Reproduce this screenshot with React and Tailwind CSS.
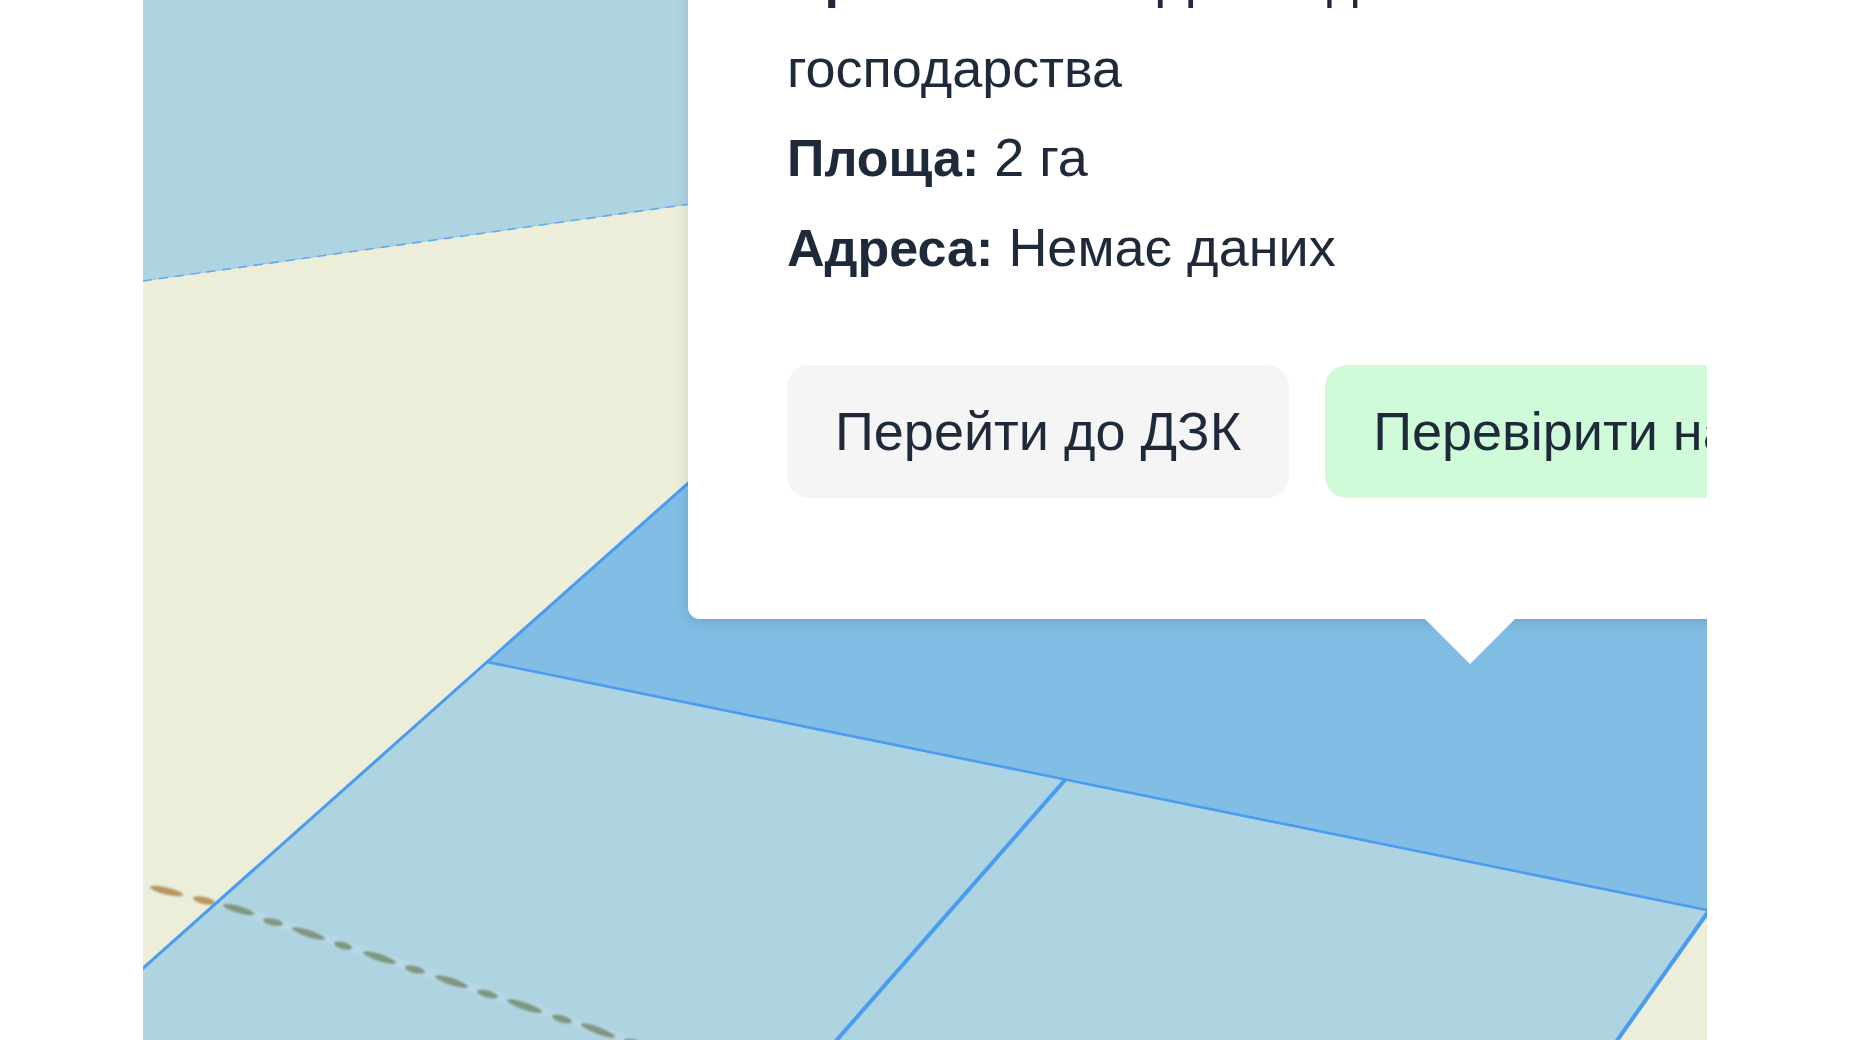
const PARCEL_STROKE = "#4a9cf0";

// Long and short strokes of the dirt track: [x1, y1, x2, y2]
const TRACK = [
  [7, 887, 40, 895],
  [50, 898, 72, 903],
  [80, 905, 111, 914],
  [120, 920, 140, 924],
  [149, 928, 182, 939],
  [191, 943, 209, 948],
  [220, 952, 253, 963],
  [262, 967, 282, 972],
  [292, 976, 325, 987],
  [334, 991, 355, 997],
  [364, 1000, 399, 1012],
  [409, 1016, 429, 1022],
  [438, 1024, 472, 1037],
  [481, 1040, 502, 1046],
];

const DETAILS = [
  {
    label: "Призначення:",
    value: "Для ведення особистого селянського господарства",
  },
  { label: "Площа:", value: "2 га" },
  { label: "Адреса:", value: "Немає даних" },
];

function TrackDash({ points: [x1, y1, x2, y2] }) {
  const cx = (x1 + x2) / 2;
  const cy = (y1 + y2) / 2;
  const length = Math.hypot(x2 - x1, y2 - y1);
  const angle = (Math.atan2(y2 - y1, x2 - x1) * 180) / Math.PI;
  return (
    <ellipse
      cx={cx}
      cy={cy}
      rx={length / 2}
      ry={3.6}
      fill={cx < 76 ? "#b8985a" : "#7f977f"}
      transform={`rotate(${angle} ${cx} ${cy})`}
    />
  );
}

function ParcelMap() {
  return (
    <svg
      className="absolute inset-0 h-full w-full"
      viewBox="0 0 1564 1040"
      preserveAspectRatio="xMinYMin slice"
      aria-hidden="true"
    >
      <defs>
        <filter id="soft" x="-5%" y="-10%" width="110%" height="120%">
          <feGaussianBlur stdDeviation="1.2" />
        </filter>
      </defs>
      <rect width="1564" height="1040" fill="#eceed9" />
      <path d="M0 0H1564V61L0 281Z" fill="#aed3e1" />
      <g fill="none" stroke={PARCEL_STROKE}>
        <path d="M0 281L1564 61" strokeOpacity="0.3" />
        <path
          d="M0 281L1564 61"
          strokeOpacity="0.75"
          strokeWidth="1.6"
          strokeDasharray="9 7"
        />
      </g>
      <path d="M0 968L344 662L922 780L1564 911L1475 1040H0Z" fill="#aed3e1" />
      <path d="M344 662L705 341H1564V911Z" fill="#81bde4" />
      <g filter="url(#soft)">
        <path
          d="M0 886L76 903L500 1045"
          fill="none"
          stroke="#d8e8f4"
          strokeOpacity="0.22"
          strokeWidth="9"
        />
        {TRACK.map((points) => (
          <TrackDash key={points[0]} points={points} />
        ))}
      </g>
      <g fill="none" stroke={PARCEL_STROKE}>
        <path d="M-2 970L344 662L705 341" strokeWidth="3" />
        <path d="M344 662L1564 910" strokeWidth="2.6" />
        <path d="M922 780L692 1042" strokeWidth="4" />
        <path d="M1565 912L1473 1042" strokeWidth="4" />
      </g>
    </svg>
  );
}

function ParcelPopup() {
  return (
    <div className="absolute -top-24 left-[545px] w-[1564px] rounded-xl bg-white px-[99px] pt-[30px] pb-[121px] text-[54px] leading-[89px] text-gray-800 shadow-[0_3px_14px_rgba(0,0,0,0.12)]">
      {DETAILS.map(({ label, value }) => (
        <p key={label}>
          <strong className="text-[52px] font-bold">{label}</strong> {value}
        </p>
      ))}
      <div className="mt-[72px] flex gap-9">
        <button
          type="button"
          className="shrink-0 rounded-[22px] bg-neutral-100 px-12 py-[22px]"
        >
          Перейти до ДЗК
        </button>
        <button
          type="button"
          className="grow rounded-[22px] bg-[#cffbd8] px-12 py-[22px] text-left"
        >
          Перевірити на
        </button>
      </div>
      <svg
        className="absolute top-full left-1/2 -ml-[45px] h-[45px] w-[90px]"
        viewBox="0 0 90 45"
        aria-hidden="true"
      >
        <path d="M0 0H90L45 45Z" fill="#ffffff" />
      </svg>
    </div>
  );
}

export default function App() {
  return (
    <div className="h-screen overflow-hidden bg-white px-[143px] font-['Liberation_Sans',Arial,sans-serif]">
      <main className="relative h-full overflow-hidden">
        <ParcelMap />
        <ParcelPopup />
      </main>
    </div>
  );
}
